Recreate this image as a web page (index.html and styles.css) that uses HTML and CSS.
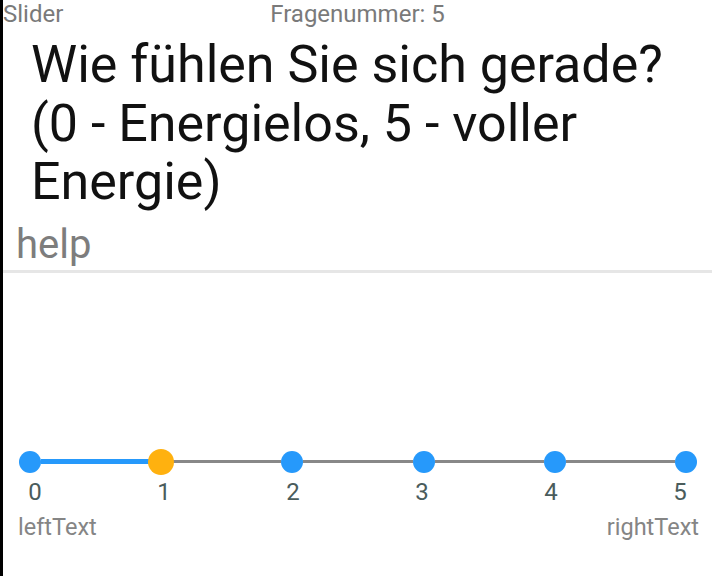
FILE: index.html
```html
<!DOCTYPE html>
<html lang="de">
<head>
<meta charset="utf-8">
<title>Slider</title>
<link rel="stylesheet" href="styles.css">
</head>
<body>
<div class="screen">
  <header class="topbar">
    <span class="type">Slider</span>
    <span class="number">Fragenummer: 5</span>
    <span></span>
  </header>
  <h1 class="question">Wie fühlen Sie sich gerade? (0 - Energielos, 5 - voller Energie)</h1>
  <div class="help">help</div>
  <hr class="divider">
  <div class="slider">
    <div class="track">
      <span class="dot"></span>
      <span class="seg seg-active"></span>
      <span class="dot dot-current"></span>
      <span class="seg"></span>
      <span class="dot"></span>
      <span class="seg"></span>
      <span class="dot"></span>
      <span class="seg"></span>
      <span class="dot"></span>
      <span class="seg"></span>
      <span class="dot"></span>
    </div>
    <div class="ticks">
      <span>0</span><span>1</span><span>2</span><span>3</span><span>4</span><span>5</span>
    </div>
    <div class="ends">
      <span>leftText</span>
      <span>rightText</span>
    </div>
  </div>
</div>
</body>
</html>
```
FILE: styles.css
```css
html, body {
  margin: 0;
  padding: 0;
  background: #ffffff;
}
body {
  font-family: Roboto, "Noto Sans", sans-serif;
}
.screen {
  border-left: 3px solid #000;
  height: 576px;
  box-sizing: border-box;
  overflow: hidden;
}
.topbar {
  display: grid;
  grid-template-columns: 1fr auto 1fr;
  font-size: 24px;
  line-height: 28px;
  color: #7a7a7a;
  height: 28px;
}
.question {
  margin: 8px 30px 0 28px;
  font-size: 52px;
  line-height: 58.5px;
  font-weight: 400;
  color: #111;
}
.help {
  margin: 9px 0 0 13px;
  font-size: 40px;
  line-height: 47px;
  color: #7d7d7d;
}
.divider {
  margin: 2px 0 0 0;
  border: 0;
  height: 3px;
  background: #e6e6e6;
}
.slider {
  margin-top: 176px;
}
.track {
  display: flex;
  align-items: center;
  height: 26px;
  margin: 0 15px 0 16px;
}
.dot {
  flex: none;
  width: 22px;
  height: 22px;
  border-radius: 50%;
  background: #2699fb;
  position: relative;
  z-index: 1;
}
.dot-current {
  width: 26px;
  height: 26px;
  margin: 0 -2px;
  background: #ffb10f;
}
.seg {
  flex: 1;
  height: 3px;
  background: #888;
}
.seg-active {
  height: 5px;
  background: #2699fb;
}
.ticks {
  display: flex;
  justify-content: space-between;
  margin: 3px 12px 0 12px;
  font-size: 24px;
  line-height: 28px;
  color: #4a5c5c;
}
.ticks span {
  width: 40px;
  text-align: center;
}
.ends {
  display: flex;
  justify-content: space-between;
  margin: 8px 13px 0 15px;
  font-size: 23.5px;
  line-height: 27px;
  color: #858585;
}
```
